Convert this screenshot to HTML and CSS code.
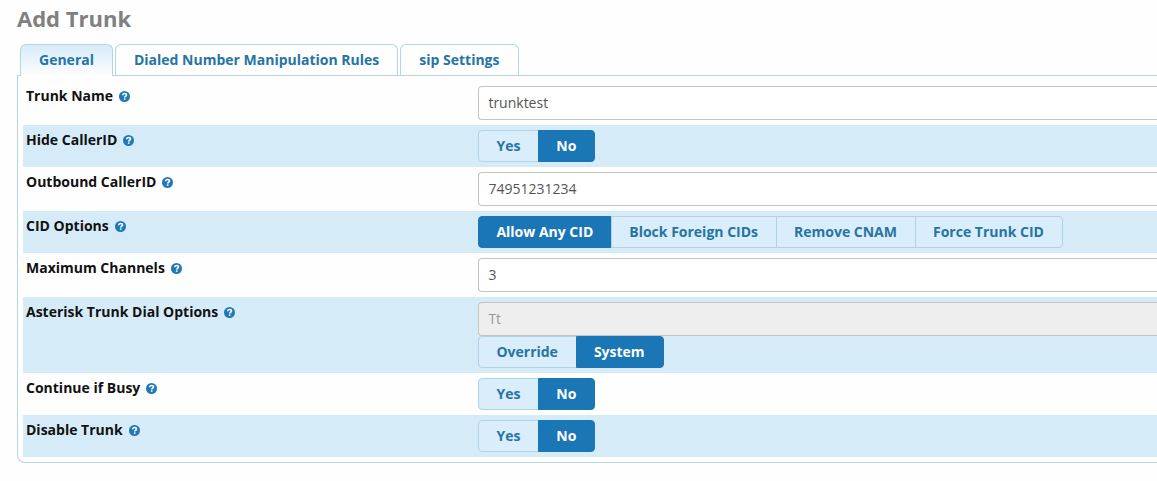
FILE: index.html
```
<!DOCTYPE html>
<html lang="en">
<head>
<meta charset="utf-8">
<title>Add Trunk</title>
<link rel="stylesheet" href="styles.css">
</head>
<body>
<svg class="sprite" aria-hidden="true">
  <symbol id="help" viewBox="0 0 12 12">
    <circle cx="6" cy="6" r="6" fill="#2079b4"/>
    <path d="M3.900 4.700C4 3.300 4.900 2.700 6 2.700c1.300 0 2.200.7 2.200 1.700C8.200 5.800 6.200 5.700 6.200 7.200" fill="none" stroke="#fff" stroke-width="1.700"/>
    <path d="M5.300 8h1.800v1.600H5.300z" fill="#fff"/>
  </symbol>
</svg>
<main class="page">
  <h1 class="title">Add Trunk</h1>
  <div class="tabs" role="tablist">
    <button class="tab tab-active" type="button" role="tab" aria-selected="true">General</button>
    <button class="tab" type="button" role="tab" aria-selected="false">Dialed Number Manipulation Rules</button>
    <button class="tab" type="button" role="tab" aria-selected="false">sip Settings</button>
  </div>
  <form class="panel">
    <div class="row">
      <div class="name"><label for="trunk-name">Trunk Name</label><svg class="help"><use href="#help"/></svg></div>
      <div class="control"><input class="field" id="trunk-name" type="text" value="trunktest"></div>
    </div>
    <div class="row row-shaded">
      <div class="name"><span id="hide-label">Hide CallerID</span><svg class="help"><use href="#help"/></svg></div>
      <div class="control">
        <div class="radioset" role="radiogroup" aria-labelledby="hide-label">
          <input class="radio" type="radio" name="hide" id="hide-yes"><label class="option" for="hide-yes">Yes</label>
          <input class="radio" type="radio" name="hide" id="hide-no" checked><label class="option" for="hide-no">No</label>
        </div>
      </div>
    </div>
    <div class="row">
      <div class="name"><label for="outcid">Outbound CallerID</label><svg class="help"><use href="#help"/></svg></div>
      <div class="control"><input class="field" id="outcid" type="text" value="74951231234"></div>
    </div>
    <div class="row row-shaded">
      <div class="name"><span id="cid-label">CID Options</span><svg class="help"><use href="#help"/></svg></div>
      <div class="control">
        <div class="radioset" role="radiogroup" aria-labelledby="cid-label">
          <input class="radio" type="radio" name="cid" id="cid-any" checked><label class="option" for="cid-any">Allow Any CID</label>
          <input class="radio" type="radio" name="cid" id="cid-block"><label class="option" for="cid-block">Block Foreign CIDs</label>
          <input class="radio" type="radio" name="cid" id="cid-remove"><label class="option" for="cid-remove">Remove CNAM</label>
          <input class="radio" type="radio" name="cid" id="cid-force"><label class="option" for="cid-force">Force Trunk CID</label>
        </div>
      </div>
    </div>
    <div class="row">
      <div class="name"><label for="maxchans">Maximum Channels</label><svg class="help"><use href="#help"/></svg></div>
      <div class="control"><input class="field" id="maxchans" type="text" value="3"></div>
    </div>
    <div class="row row-shaded">
      <div class="name"><label for="dialopts">Asterisk Trunk Dial Options</label><svg class="help"><use href="#help"/></svg></div>
      <div class="control">
        <input class="field" id="dialopts" type="text" value="Tt" disabled>
        <div class="radioset" role="radiogroup" aria-label="Asterisk Trunk Dial Options source">
          <input class="radio" type="radio" name="dial" id="dial-override"><label class="option" for="dial-override">Override</label>
          <input class="radio" type="radio" name="dial" id="dial-system" checked><label class="option" for="dial-system">System</label>
        </div>
      </div>
    </div>
    <div class="row">
      <div class="name"><span id="busy-label">Continue if Busy</span><svg class="help"><use href="#help"/></svg></div>
      <div class="control">
        <div class="radioset" role="radiogroup" aria-labelledby="busy-label">
          <input class="radio" type="radio" name="busy" id="busy-yes"><label class="option" for="busy-yes">Yes</label>
          <input class="radio" type="radio" name="busy" id="busy-no" checked><label class="option" for="busy-no">No</label>
        </div>
      </div>
    </div>
    <div class="row row-shaded">
      <div class="name"><span id="disable-label">Disable Trunk</span><svg class="help"><use href="#help"/></svg></div>
      <div class="control">
        <div class="radioset" role="radiogroup" aria-labelledby="disable-label">
          <input class="radio" type="radio" name="disable" id="disable-yes"><label class="option" for="disable-yes">Yes</label>
          <input class="radio" type="radio" name="disable" id="disable-no" checked><label class="option" for="disable-no">No</label>
        </div>
      </div>
    </div>
  </form>
</main>
</body>
</html>
```
FILE: styles.css
```
* {
  box-sizing: border-box;
}

body {
  margin: 0;
  background: #fefefe;
  color: #111;
  font-family: "Open Sans", "Noto Sans", sans-serif;
  font-size: 14px;
  line-height: 20px;
}

.sprite {
  display: none;
}

.page {
  padding: 3px 0 0 17px;
}

.title {
  margin: 0 0 11px;
  color: #808080;
  font-size: 22px;
  font-weight: 700;
  line-height: 30px;
}

.tabs {
  display: flex;
  gap: 2px;
  padding-left: 3px;
}

.tab {
  height: 31px;
  padding: 0 18px;
  border: 1px solid #b4d6e2;
  border-bottom: 0;
  border-radius: 6px 6px 0 0;
  background: #fefefe;
  color: #2674a4;
  font: inherit;
  font-weight: 700;
}

.tab-active {
  height: 32px;
  margin-bottom: -1px;
  padding-bottom: 1px;
  background: linear-gradient(#d7ebf9, #fefefe);
  z-index: 1;
}

.panel {
  padding: 5px 0 5px 5px;
  border: 1px solid #b4d6e2;
  border-right: 0;
  border-radius: 0 0 0 8px;
}

.row {
  display: grid;
  grid-template-columns: 2fr 3fr;
  padding: 5px 0 5px 3px;
}

.row-shaded {
  background: #d6ebf8;
}

.name {
  display: flex;
  align-items: center;
  align-self: start;
  gap: 6px;
  font-weight: 700;
}

.help {
  width: 11px;
  height: 11px;
}

.field {
  display: block;
  width: 100%;
  height: 34px;
  padding: 0 9px 2px;
  border: 1px solid #c4c4c4;
  border-right: 0;
  border-radius: 4px 0 0 4px;
  background: #fff;
  color: #555;
  font: inherit;
}

.field:disabled {
  background: #eee;
  color: #999;
}

.radioset {
  display: flex;
}

.radio {
  width: 0;
  height: 0;
  margin: 0;
  appearance: none;
}

.option {
  height: 32px;
  padding: 5px 18px 5px 17px;
  border: 1px solid #b0d3e6;
  background: #d9edfa;
  color: #2674a4;
  font-weight: 700;
}

.option + .radio + .option {
  margin-left: -1px;
}

.option:first-of-type {
  border-radius: 4px 0 0 4px;
}

.option:last-of-type {
  border-radius: 0 4px 4px 0;
}

.radio:checked + .option {
  border-color: #1b76b5;
  background: #1b76b5;
  color: #fff;
}
```
